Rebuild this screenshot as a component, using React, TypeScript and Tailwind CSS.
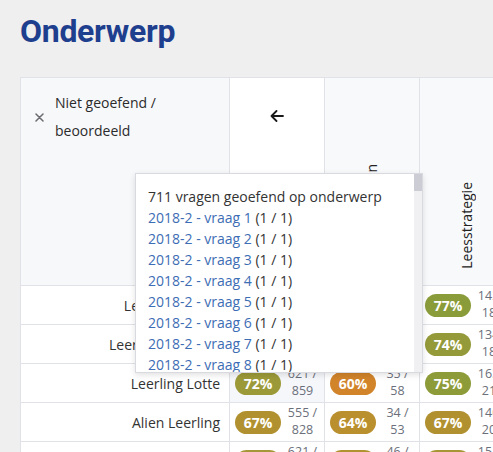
import React from 'react'

interface Score {
  pct: string
  top: string
  bottom: string
  bg: string
  hover?: boolean
}

interface Row {
  name: string
  scores: Score[]
}

const rows: Row[] = [
  {
    name: 'Leerling Sanne',
    scores: [
      { pct: '70%', top: '603', bottom: '861', bg: 'bg-[#a29838]' },
      { pct: '62%', top: '36', bottom: '58', bg: 'bg-[#c88a2b]' },
      { pct: '77%', top: '142', bottom: '184', bg: 'bg-[#8a9c3a]' },
    ],
  },
  {
    name: 'Leerling Maarten',
    scores: [
      { pct: '69%', top: '590', bottom: '855', bg: 'bg-[#a89535]' },
      { pct: '66%', top: '38', bottom: '58', bg: 'bg-[#b4902e]' },
      { pct: '74%', top: '134', bottom: '181', bg: 'bg-[#949a3a]' },
    ],
  },
  {
    name: 'Leerling Lotte',
    scores: [
      { pct: '72%', top: '621', bottom: '859', bg: 'bg-[#9c9a38]', hover: true },
      { pct: '60%', top: '35', bottom: '58', bg: 'bg-[#d1842a]' },
      { pct: '75%', top: '163', bottom: '217', bg: 'bg-[#8e9b39]' },
    ],
  },
  {
    name: 'Alien Leerling',
    scores: [
      { pct: '67%', top: '555', bottom: '828', bg: 'bg-[#b1912f]' },
      { pct: '64%', top: '34', bottom: '53', bg: 'bg-[#ba8f2d]' },
      { pct: '67%', top: '140', bottom: '209', bg: 'bg-[#b1912f]' },
    ],
  },
  {
    name: 'Leerling Noah',
    scores: [
      { pct: '71%', top: '621', bottom: '874', bg: 'bg-[#a49737]' },
      { pct: '68%', top: '46', bottom: '68', bg: 'bg-[#b0922f]' },
      { pct: '70%', top: '151', bottom: '216', bg: 'bg-[#a69636]' },
    ],
  },
]

const vragen = Array.from({ length: 12 }, (_, i) => i + 1)

const ScoreCell: React.FC<{ score: Score }> = ({ score }) => (
  <div
    className={`flex h-[39px] items-center border-b border-r border-[#e1e2e7] pl-[5px] ${
      score.hover ? 'bg-[#f6f7fa]' : 'bg-white'
    }`}
  >
    <span
      className={`flex h-[23px] w-[46px] shrink-0 items-center justify-center rounded-full text-[14px] font-bold text-white ${score.bg}`}
    >
      {score.pct}
    </span>
    <div className="mb-[2px] flex-1 text-center text-[12.5px] leading-[17px] text-[#6b6f7a]">
      <div>{score.top} /</div>
      <div>{score.bottom}</div>
    </div>
  </div>
)

const RotatedHeader: React.FC<{ label: string }> = ({ label }) => (
  <div className="flex h-[208px] items-end justify-center border-b border-r border-[#e1e2e7] bg-[#f8f9fb] pb-[16px]">
    <span className="rotate-180 text-[14px] leading-[18px] text-[#222] [writing-mode:vertical-rl]">{label}</span>
  </div>
)

export default function App() {
  return (
    <div className="h-[452px] w-[493px] overflow-hidden bg-[#efefef] pl-[20px] pt-[11px] font-['Open_Sans',sans-serif] text-[#333]">
      <h1 className="h-[40px] font-['Roboto',sans-serif] text-[32px] font-bold leading-[40px] tracking-[-0.3px] text-[#1e3e8e]">
        Onderwerp
      </h1>

      <div className="relative mt-[26px] w-max border-l border-t border-[#e1e2e7] bg-white">
        <div className="grid grid-cols-[209px_95px_95px_95px]">
          {/* Header */}
          <div className="flex h-[208px] items-start border-b border-r border-[#e1e2e7] bg-[#f7f8fa] pl-[14px] pt-[11px]">
            <div className="flex items-center gap-[11px]">
              <svg width="9" height="9" viewBox="0 0 9 9" className="shrink-0">
                <path d="M1 1L8 8M8 1L1 8" stroke="#6b6b70" strokeWidth="1.5" strokeLinecap="round" />
              </svg>
              <div className="text-[14px] leading-[28px] text-[#2b2b2b]">
                <div>Niet geoefend /</div>
                <div>beoordeeld</div>
              </div>
            </div>
          </div>
          <div className="flex h-[208px] justify-center border-b border-r border-[#e1e2e7] bg-white pt-[32px]">
            <svg width="14" height="12" viewBox="0 0 14 12">
              <path
                d="M13 6H1.5M6.5 1L1.5 6L6.5 11"
                fill="none"
                stroke="#1a1a1a"
                strokeWidth="1.8"
                strokeLinecap="round"
                strokeLinejoin="round"
              />
            </svg>
          </div>
          <RotatedHeader label="Tekstverbanden" />
          <RotatedHeader label="Leesstrategie" />

          {/* Rows */}
          {rows.map((row) => (
            <React.Fragment key={row.name}>
              <div className="flex h-[39px] items-center justify-end border-b border-r border-[#e1e2e7] bg-white pr-[9px] text-[14px] text-[#333]">
                {row.name}
              </div>
              {row.scores.map((s, i) => (
                <ScoreCell key={i} score={s} />
              ))}
            </React.Fragment>
          ))}
        </div>

        {/* Popover */}
        <div className="absolute left-[114px] top-[95px] z-10 h-[200px] w-[288px] overflow-hidden border border-[#d9dae0] bg-white shadow-[0_2px_6px_rgba(0,0,0,0.12)]">
          <div className="pl-[12px] pr-[10px] pt-[12px] text-[14px] leading-[21px]">
            <div className="text-[#333]">711 vragen geoefend op onderwerp</div>
            {vragen.map((n) => (
              <div key={n} className="whitespace-nowrap">
                <a className="text-[#3d6db4]">2018-2 - vraag {n}</a>
                <span className="text-[#333]"> (1 / 1)</span>
              </div>
            ))}
          </div>
          {/* scrollbar */}
          <div className="absolute bottom-0 right-0 top-0 w-[8px] bg-[#f0f0f3]">
            <div className="h-[17px] w-full bg-[#cbccd4]" />
          </div>
        </div>
      </div>
    </div>
  )
}
